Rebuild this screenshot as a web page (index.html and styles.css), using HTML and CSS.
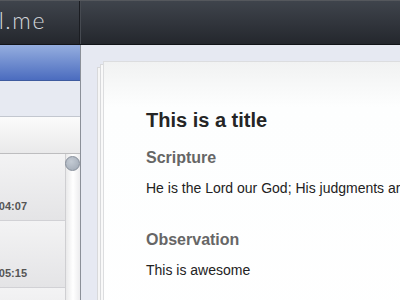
FILE: index.html
```html
<!DOCTYPE html>
<html lang="en">
<head>
  <meta charset="UTF-8">
  <title>journal.me</title>
  <link rel="stylesheet" href="styles.css">
</head>
<body>
<div id="app">
  <div id="topBar">
    <div class="brand">journal.me</div>
    <div class="topBar-rest"></div>
  </div>
  <div id="workspace">
    <div id="sidebar">
      <div class="sidebar-head"></div>
      <div class="sidebar-search"></div>
      <div class="sidebar-tools"></div>
      <div class="sidebar-list">
        <ul class="entryList">
          <li class="entry"><span class="entry-time">04:07</span></li>
          <li class="entry"><span class="entry-time">05:15</span></li>
          <li class="entry"></li>
        </ul>
        <div class="scrollTrack">
          <div class="scrollThumb"></div>
        </div>
      </div>
    </div>
    <div id="main">
      <div class="paper">
        <h1>This is a title</h1>
        <h2>Scripture</h2>
        <p>He is the Lord our God; His judgments are in all the earth.</p>
        <h2>Observation</h2>
        <p>This is awesome</p>
      </div>
    </div>
  </div>
</div>
</body>
</html>
```

FILE: styles.css
```css
html, body, div, ul, li, h1, h2, p {padding:0; margin:0;}
ul {list-style:none;}

body {width:400px; height:300px; overflow:hidden; font-family:"Liberation Sans", Helvetica, Arial, sans-serif;}

#app {display:flex; flex-direction:column; height:300px;}

/* top bar */
#topBar {display:flex; height:43px; border-top:1px solid #55585d; border-bottom:1px solid #121418;
         background:linear-gradient(#3f444c, #24272d);}
.brand {display:flex; justify-content:flex-end; width:80px; padding-top:5px; padding-right:33px; box-sizing:border-box;
        border-right:1px solid #1b1d22; overflow:hidden; white-space:nowrap; letter-spacing:1.6px;
        font-family:Lato, "Open Sans", sans-serif; font-weight:300; font-size:23px; color:#d3d6da;}
.topBar-rest {flex:1; box-shadow:inset 1px 0 0 #464a51;}

/* sidebar */
#workspace {display:flex; flex:1; min-height:0;}
#sidebar {display:flex; flex-direction:column; width:80px; border-right:1px solid #8b9099;}
.sidebar-head {height:35px; border-bottom:1px solid #3f5b9f; background:linear-gradient(#95aedf, #4b6cbf);}
.sidebar-search {height:35px; border-bottom:1px solid #c3c7cf; background:#e7eaf2;}
.sidebar-tools {height:36px; border-bottom:1px solid #bdbdbf; background:linear-gradient(#fbfbfb, #e9e9ea);}
.sidebar-list {display:flex; flex:1; min-height:0;}
.entryList {flex:1; overflow:hidden;}
.entry {display:flex; justify-content:flex-end; align-items:flex-end; height:58px; padding-right:38px; padding-bottom:8px;
        border-bottom:1px solid #d1d1d5; background:linear-gradient(#f3f3f4, #e4e4e6); white-space:nowrap;}
.entry-time {font-size:11px; font-weight:bold; color:#555;}
.scrollTrack {width:14px; border-left:1px solid #cfcfd2; background:linear-gradient(90deg, #e9e9ea, #fff 50%, #ececee);}
.scrollThumb {width:15px; height:15px; margin:2px 0 0 -1px; box-sizing:border-box; border-radius:50%;
              border:1px solid #878f9b; background:radial-gradient(circle at 40% 35%, #c4cbd4, #9ea7b3);}

/* main */
#main {flex:1; padding:16px 0 0 22px; background:#e6e9f2; overflow:hidden;}
.paper {width:400px; height:300px; padding:46px 0 0 42px; border:1px solid #dcdddf;
        background:linear-gradient(#f1f2f2, #fdfefe 45px, #fff);
        box-shadow:-3px 3px 0 -1px #f9f9f9, -3px 3px 0 0 #d8d9db, -6px 6px 0 -1px #f6f6f6, -6px 6px 0 0 #d8d9db;}
.paper h1 {margin-bottom:16px; font-size:20px; line-height:24px; color:#252525; white-space:nowrap;}
.paper h2 {margin-bottom:10px; font-size:16px; line-height:20px; color:#666;}
.paper p {margin-bottom:32px; font-size:14px; line-height:20px; color:#222; white-space:nowrap;}
```
